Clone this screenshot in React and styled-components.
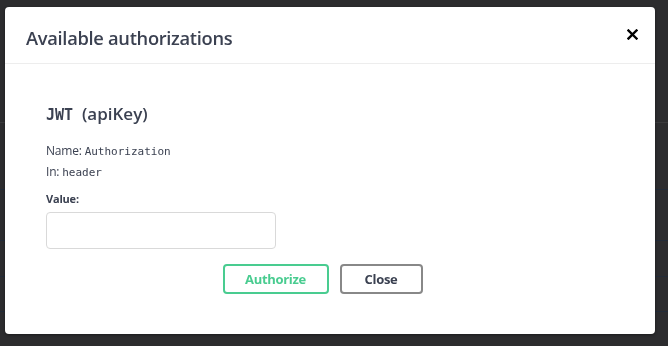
import React from "react";
import styled, { createGlobalStyle } from "styled-components";

const Global = createGlobalStyle`
  html, body { margin: 0; padding: 0; }
  body { background: #2c2c2e; width: 668px; height: 346px; overflow: hidden; font-family: "Open Sans", "Liberation Sans", sans-serif; }
`;

const Page = styled.div`
  height: 346px;
  display: flex;
  flex-direction: column;
  background: #2c2c2e;
`;

const PageLine = styled.div`
  height: ${(p) => p.$h}px;
  border-bottom: 1px solid ${(p) => p.$c};
  flex: none;
`;

const Overlay = styled.div`
  position: fixed;
  inset: 0;
  padding: 7px 13px 12px 5px;
  box-sizing: border-box;
  display: flex;
  align-items: flex-start;
`;

const Modal = styled.div`
  width: 650px;
  height: 327px;
  background: #fff;
  border-radius: 4px;
  box-shadow: 0 1px 3px rgba(0, 0, 0, 0.4);
  display: flex;
  flex-direction: column;
  color: #3b4151;
`;

const Header = styled.div`
  height: 56px;
  flex: none;
  display: flex;
  align-items: center;
  justify-content: space-between;
  padding: 0 17px 0 21px;
  border-bottom: 1px solid #ededed;
`;

const Title = styled.h3`
  margin: 0;
  font-family: "Open Sans", sans-serif;
  font-size: 18.3px;
  font-weight: 600;
  letter-spacing: -0.3px;
  color: #3b4151;
  padding-top: 4px;
`;

const CloseX = styled.button`
  border: none;
  background: none;
  padding: 0;
  width: 11px;
  height: 11px;
  display: flex;
  cursor: pointer;
  margin-bottom: 1px;
`;

const Body = styled.div`
  padding: 40px 20px 0 41px;
  display: flex;
  flex-direction: column;
`;

const SchemeTitle = styled.h4`
  margin: 0;
  height: 20px;
  line-height: 20px;
  font-size: 17px;
  font-weight: 600;
  font-family: "Open Sans", sans-serif;
  color: #3b4151;
  letter-spacing: 0px;
`;

const Code = styled.code`
  font-family: "DejaVu Sans Mono", "Liberation Mono", monospace;
  font-size: ${(p) => p.$size || 11}px;
  font-weight: ${(p) => p.$weight || 400};
  letter-spacing: ${(p) => p.$ls || 0}px;
  color: #3b4151;
`;

const Info = styled.p`
  margin: ${(p) => p.$mt}px 0 0;
  height: 18px;
  line-height: 18px;
  font-size: 12px;
  color: #3b4151;
  letter-spacing: -0.2px;
`;

const Label = styled.label`
  margin-top: 9px;
  height: 18px;
  line-height: 18px;
  font-size: 11px;
  font-weight: 700;
  color: #3b4151;
  letter-spacing: -0.2px;
`;

const Input = styled.input`
  margin-top: 4px;
  width: 230px;
  height: 37px;
  box-sizing: border-box;
  border: 1px solid #d9d9d9;
  border-radius: 4px;
  background: #fff;
  outline: none;
`;

const Buttons = styled.div`
  margin-top: 15px;
  display: flex;
  justify-content: center;
  gap: 11px;
  padding-right: 36px;
`;

const Btn = styled.button`
  width: ${(p) => p.$w}px;
  height: 30px;
  box-sizing: border-box;
  border: 2px solid ${(p) => p.$border};
  border-radius: 4px;
  background: #fff;
  color: ${(p) => p.$color};
  font-family: "Open Sans", sans-serif;
  font-weight: 700;
  font-size: 13px;
  letter-spacing: -0.3px;
  padding: 0;
  cursor: pointer;
`;

export default function App() {
  return (
    <>
      <Global />
      <Page>
        <PageLine $h={122} $c="#3a3a3c" />
        <PageLine $h={66} $c="#222b38" />
        <PageLine $h={50} $c="#222b38" />
        <PageLine $h={35} $c="#222b38" />
        <PageLine $h={34} $c="#222b38" />
      </Page>
      <Overlay>
        <Modal>
          <Header>
            <Title>Available authorizations</Title>
            <CloseX aria-label="close">
              <svg width="11" height="11" viewBox="0 0 11 11">
                <path d="M1.5 1.5 L9.5 9.5 M9.5 1.5 L1.5 9.5" stroke="#000" strokeWidth="2.4" strokeLinecap="square" />
              </svg>
            </CloseX>
          </Header>
          <Body>
            <SchemeTitle>
              <Code $size={15} $weight={600} $ls={0}>JWT</Code>&nbsp; (apiKey)
            </SchemeTitle>
            <Info $mt={18}>
              Name: <Code>Authorization</Code>
            </Info>
            <Info $mt={3}>
              In: <Code>header</Code>
            </Info>
            <Label>Value:</Label>
            <Input type="text" />
            <Buttons>
              <Btn $w={106} $border="#49cc90" $color="#49cc90">Authorize</Btn>
              <Btn $w={83} $border="#888" $color="#3b4151">Close</Btn>
            </Buttons>
          </Body>
        </Modal>
      </Overlay>
    </>
  );
}
